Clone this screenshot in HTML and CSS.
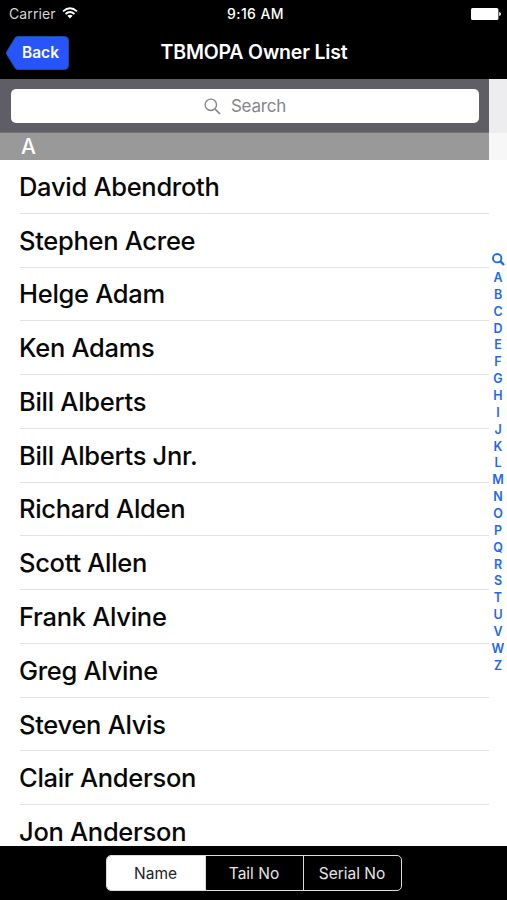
FILE: index.html
```html
<!DOCTYPE html>
<html lang="en">
<head>
<meta charset="utf-8">
<title>TBMOPA Owner List</title>
<link rel="stylesheet" href="styles.css">
</head>
<body>
<div class="app">
  <header class="top">
    <div class="status">
      <div class="carrier"><span class="carrier-name">Carrier</span>
        <svg class="wifi" width="16" height="12" viewBox="0 0 16 12" fill="none" stroke="#fff" stroke-width="1.8"><path d="M1 4.4Q8-2 15 4.4M3.5 7Q8 3 12.5 7"/><path d="M8 11.5 5.4 8.8Q8 6.8 10.6 8.8Z" fill="#fff" stroke="none"/></svg>
      </div>
      <span class="time">9:16 AM</span>
      <svg class="battery" width="30" height="12" viewBox="0 0 30 12" fill="#fff"><rect width="27.4" height="12" rx="1.6"/><path d="M28.2 4Q30 4.5 30 6T28.2 8Z"/></svg>
    </div>
    <div class="nav">
      <button class="back"><svg class="back-shape" width="63" height="34" viewBox="0 0 63 34"><path d="M12 .5H58.5Q62.500 .5 62.500 4.500V29.500Q62.500 33.500 58.500 33.500H12Q10 33.500 9 32L.8 18.500Q0 17 .8 15.500L9 2Q10 .5 12 .5Z" fill="#2855fb" stroke="#174e9e"/></svg><span class="back-label">Back</span></button>
      <h1 class="title">TBMOPA Owner List</h1>
      <span></span>
    </div>
  </header>
  <main class="content">
    <section class="list">
      <div class="search"><div class="field">
        <svg width="17" height="17" viewBox="0 0 17 17" fill="none" stroke="#85858a" stroke-width="1.4"><circle cx="6.800" cy="6.800" r="5.700"/><path d="m11 11 5 5" stroke-width="1.700"/></svg>
        <span class="placeholder">Search</span>
      </div></div>
      <h2 class="section">A</h2>
      <ul class="names">
        <li><span>David Abendroth</span></li>
        <li><span>Stephen Acree</span></li>
        <li><span>Helge Adam</span></li>
        <li><span>Ken Adams</span></li>
        <li><span>Bill Alberts</span></li>
        <li><span>Bill Alberts Jnr.</span></li>
        <li><span>Richard Alden</span></li>
        <li><span>Scott Allen</span></li>
        <li><span>Frank Alvine</span></li>
        <li><span>Greg Alvine</span></li>
        <li><span>Steven Alvis</span></li>
        <li><span>Clair Anderson</span></li>
        <li><span>Jon Anderson</span></li>
      </ul>
    </section>
    <aside class="index">
      <svg class="index-search" width="13" height="13" viewBox="0 0 13 13" fill="none" stroke="#1f68f0" stroke-width="1.900"><circle cx="5.200" cy="5.200" r="4.200"/><path d="m8.200 8.200 3.800 3.800" stroke-width="2.400"/></svg>
      <span>A</span><span>B</span><span>C</span><span>D</span><span>E</span><span>F</span><span>G</span><span>H</span><span>I</span><span>J</span><span>K</span><span>L</span><span>M</span><span>N</span><span>O</span><span>P</span><span>Q</span><span>R</span><span>S</span><span>T</span><span>U</span><span>V</span><span>W</span><span>Z</span>
    </aside>
  </main>
  <footer class="toolbar">
    <div class="segments">
      <button class="segment selected">Name</button><button class="segment">Tail No</button><button class="segment">Serial No</button>
    </div>
  </footer>
</div>
</body>
</html>
```
FILE: styles.css
```css
* { box-sizing: border-box; }
body { margin: 0; background: #000; font-family: Inter, "Liberation Sans", sans-serif; }
button { font: inherit; border: 0; padding: 0; background: none; color: inherit; }
.app { height: 900px; display: flex; flex-direction: column; overflow: hidden; }
.top { height: 79px; flex: none; color: #fff; }
.status { height: 27px; display: grid; grid-template-columns: 1fr auto 1fr; align-items: center; padding: 0 6px 0 9px; font-size: 14px; }
.carrier { display: flex; align-items: center; gap: 6px; color: #d6d6d6; }
.carrier-name { letter-spacing: .1px; }
.wifi { margin-top: -1px; }
.time { font-weight: 500; letter-spacing: .4px; padding-left: 1px; }
.battery { justify-self: end; }
.nav { height: 52px; display: grid; grid-template-columns: 1fr auto 1fr; align-items: center; padding: 0 6px; }
.back { width: 63px; height: 34px; display: grid; margin-top: -1px; }
.back-shape, .back-label { grid-area: 1 / 1; }
.back-label { align-self: center; padding-left: 6px; margin-top: -1px; font-size: 15.500px; font-weight: 600; }
.title { margin: -2px 0 0 1px; font-size: 19.500px; font-weight: 600; letter-spacing: -.18px; }
.content { height: 767px; flex: none; display: flex; background: #fff; }
.list { width: 489px; overflow: hidden; }
.search { height: 54px; padding: 10px 10px 0 11px; background: #5f5e66; border-bottom: 1px solid #737277; }
.field { height: 34px; border-radius: 5px; background: #fff; display: flex; align-items: center; justify-content: center; gap: 10px; color: #85858a; font-size: 17px; }
.placeholder { letter-spacing: -.2px; }
.section { height: 27px; margin: 0; padding-left: 21px; line-height: 27px; font-size: 21px; font-weight: 500; color: #fff; background: #999; }
.names { list-style: none; margin: 0; padding: 0 0 0 20px; }
.names li { height: 53.780px; display: flex; align-items: center; border-bottom: 1px solid #e2e2e3; font-size: 25.500px; font-weight: 550; letter-spacing: -.29px; color: #080808; white-space: nowrap; }
.names span { margin-left: -1px; }
.index { width: 18px; display: flex; flex-direction: column; align-items: center; background: linear-gradient(#ededef 0 54px, #f7f7f7 54px 81px, #fff 81px); color: #1f68f0; font-size: 12.500px; font-weight: 600; }
.index-search { margin: 174px 0 4px; flex: none; }
.index span { height: 16.860px; line-height: 16.860px; flex: none; }
.toolbar { height: 54px; flex: none; display: flex; justify-content: center; padding-top: 9px; background: #000; }
.segments { width: 296px; height: 36px; display: grid; grid-template-columns: 98px 98px 1fr; border: 1px solid #ddd; border-radius: 5px; overflow: hidden; }
.segment { color: #e6e6e6; font-size: 15.500px; }
.segment + .segment { border-left: 1px solid #ddd; }
.segment.selected { background: #fff; color: #222; }
```
